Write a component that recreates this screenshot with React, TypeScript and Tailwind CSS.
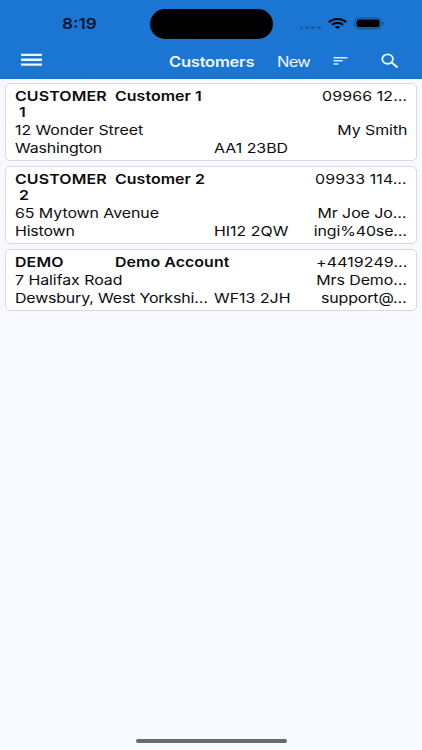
type Customer = {
  code: string[];
  name: string;
  phone: string;
  address: string;
  contact: string;
  town: string;
  postcode: string;
  email?: string;
};

const customers: Customer[] = [
  {
    code: ["CUSTOMER", "1"],
    name: "Customer 1",
    phone: "09966 12…",
    address: "12 Wonder Street",
    contact: "My Smith",
    town: "Washington",
    postcode: "AA1 23BD",
  },
  {
    code: ["CUSTOMER", "2"],
    name: "Customer 2",
    phone: "09933 114…",
    address: "65 Mytown Avenue",
    contact: "Mr Joe Jo…",
    town: "Histown",
    postcode: "HI12 2QW",
    email: "ingi%40se…",
  },
  {
    code: ["DEMO"],
    name: "Demo Account",
    phone: "+4419249…",
    address: "7 Halifax Road",
    contact: "Mrs Demo…",
    town: "Dewsbury, West Yorkshi…",
    postcode: "WF13 2JH",
    email: "support@…",
  },
];

const Left = ({ children }: { children: string }) => (
  <span className="block origin-left scale-x-[1.18] whitespace-nowrap">
    {children}
  </span>
);

const Right = ({ children }: { children?: string }) => (
  <span className="block origin-right scale-x-[1.18] whitespace-nowrap text-right">
    {children}
  </span>
);

const StatusBar = () => (
  <div className="flex h-[48px] items-start">
    <div className="w-[149.5px] pl-[61.5px] pt-[14px] text-[14.5px] font-semibold leading-[20px] text-[#03132b]">
      <Left>8:19</Left>
    </div>
    <div className="mt-[9px] h-[30px] w-[123px] rounded-full bg-black" />
    <div className="ml-[27px] mt-[26px] flex gap-[2.6px]">
      <i className="h-[3px] w-[3.4px] rounded-full bg-[#145baa]" />
      <i className="h-[3px] w-[3.4px] rounded-full bg-[#145baa]" />
      <i className="h-[3px] w-[3.4px] rounded-full bg-[#145baa]" />
      <i className="h-[3px] w-[3.4px] rounded-full bg-[#145baa]" />
    </div>
    <svg
      className="ml-[7px] mt-[18px] h-[11px] w-[19px]"
      viewBox="0 0 19 11"
      fill="none"
      stroke="#000a18"
      strokeWidth="2.2"
    >
      <path d="M.7 4.1C5.6-.2 13.4-.2 18.3 4.1" />
      <path d="M3.9 6.8c3.2-2.7 8-2.7 11.2 0" />
      <path d="M6.6 8.8c1.6-1.2 4.2-1.2 5.8 0L9.5 11z" fill="#000a18" stroke="none" />
    </svg>
    <svg className="ml-[7px] mt-[17px] h-[13px] w-[32px]" viewBox="0 0 32 13">
      <rect x=".9" y="1" width="26.2" height="10.8" rx="3.6" fill="none" stroke="#11508f" />
      <rect x="2.6" y="2.6" width="23" height="7.6" rx="2.2" fill="#000" />
      <path d="M28.6 4.6c2 .6 2 3 0 3.6z" fill="#11508f" />
    </svg>
  </div>
);

const NavBar = () => (
  <div className="flex h-[31px] items-start text-[14px] leading-[20px] text-[#eff8ff]">
    <svg className="ml-[21px] mt-[5px] h-[14px] w-[21px]" viewBox="0 0 21 14" fill="#eff8ff">
      <path d="M0 .8h21v2.3H0zM0 5.6h21v2.3H0zM0 10.5h21v2.3H0z" />
    </svg>
    <div className="ml-[127px] mt-[4px] w-[108px] font-semibold tracking-[-0.2px]">
      <Left>Customers</Left>
    </div>
    <div className="mt-[4px] w-[56px] tracking-[-0.6px]">
      <Left>New</Left>
    </div>
    <svg className="mt-[8px] h-[10px] w-[15px]" viewBox="0 0 15 10" fill="#d5e9fc">
      <path d="M.5 1h14v1.5H.5zM.5 4.1h9.2v1.5H.5zM.5 7.2h5v1.5h-5z" />
    </svg>
    <svg
      className="ml-[33px] mt-[5px] h-[16px] w-[18px]"
      viewBox="0 0 18 16"
      fill="none"
      stroke="#eff8ff"
      strokeWidth="1.8"
    >
      <ellipse cx="6.6" cy="6.1" rx="5.3" ry="4.7" />
      <path d="M10.2 9.3l6.4 5.2" strokeWidth="2.1" />
    </svg>
  </div>
);

const CustomerCard = ({ customer }: { customer: Customer }) => (
  <div className="rounded-[5px] border border-[#d9d8e1] bg-white px-[9px] pb-[3px] pt-[3px] leading-[18px]">
    <div className="flex font-semibold">
      <div className="w-[99.5px] tracking-[0.1px]">
        <Left>{customer.code[0]}</Left>
        {customer.code[1] && (
          <div className="-mt-px h-[17px] pl-[4px] leading-[17px]">
            <Left>{customer.code[1]}</Left>
          </div>
        )}
      </div>
      <div className="flex-1 tracking-[0.05px]">
        <Left>{customer.name}</Left>
      </div>
      <div className="font-normal tracking-[0.1px]">
        <Right>{customer.phone}</Right>
      </div>
    </div>
    <div className="flex justify-between tracking-[-0.05px]">
      <Left>{customer.address}</Left>
      <Right>{customer.contact}</Right>
    </div>
    <div className="flex tracking-[-0.1px]">
      <div className="w-[199px] tracking-[-0.14px]">
        <Left>{customer.town}</Left>
      </div>
      <div className="flex-1 tracking-normal">
        <Left>{customer.postcode}</Left>
      </div>
      <Right>{customer.email}</Right>
    </div>
  </div>
);

export default function App() {
  return (
    <div className="flex h-[750px] w-[422px] flex-col overflow-hidden bg-[#f8f9ff] font-['Inter',sans-serif] text-[13.5px] text-[#0c0c0e]">
      <header className="h-[79px] bg-[#1b76d3]">
        <StatusBar />
        <NavBar />
      </header>
      <main className="flex flex-1 flex-col gap-[5px] px-[5px] pt-[3.5px]">
        {customers.map((customer) => (
          <CustomerCard key={customer.name} customer={customer} />
        ))}
      </main>
      <div className="mx-auto mb-[7px] h-[4px] w-[151px] rounded-full bg-[#6a6a6e]" />
    </div>
  );
}
